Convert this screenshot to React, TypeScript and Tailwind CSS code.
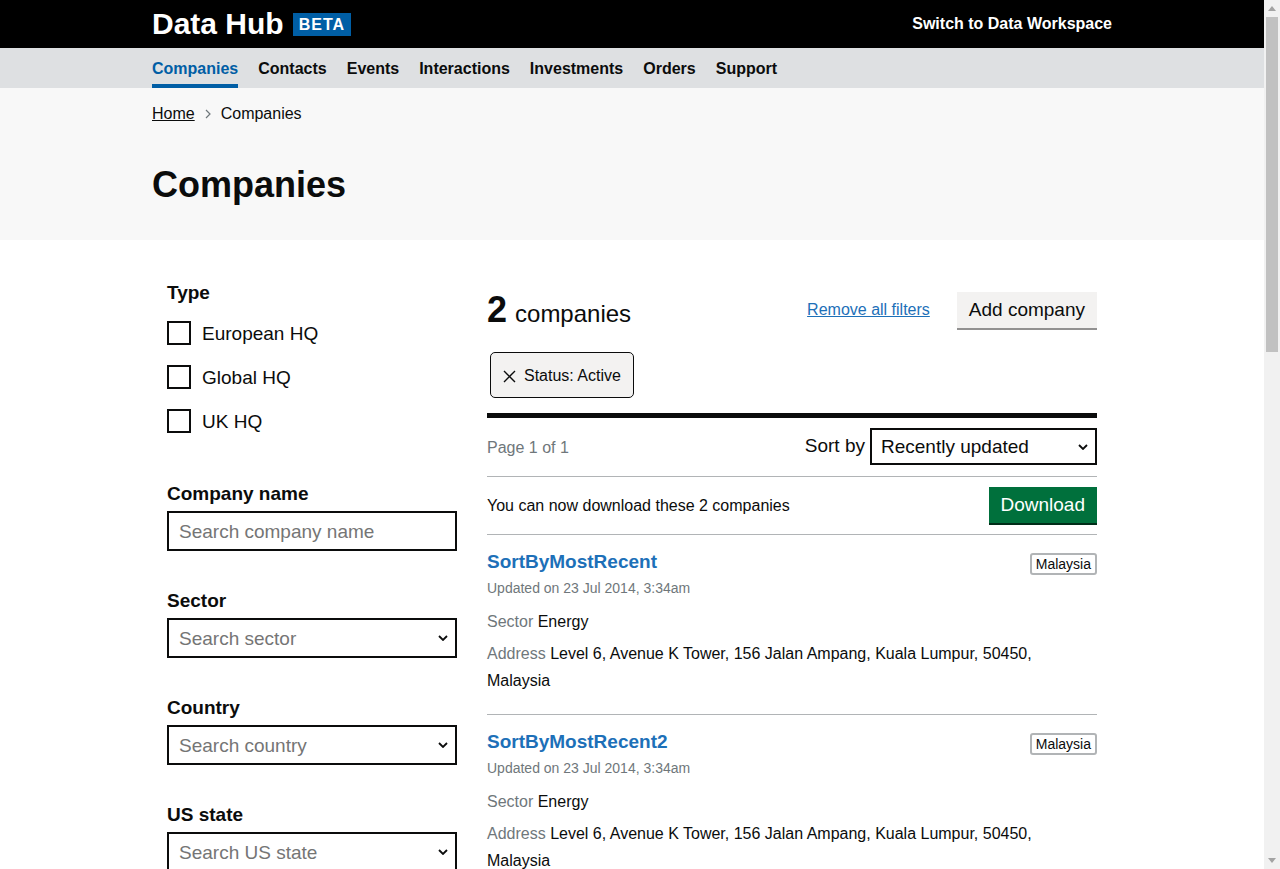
const font = "font-['Liberation_Sans',Arial,sans-serif]"

const navItems = ['Companies', 'Contacts', 'Events', 'Interactions', 'Investments', 'Orders', 'Support']

const companies = [
  { name: 'SortByMostRecent', country: 'Malaysia' },
  { name: 'SortByMostRecent2', country: 'Malaysia' },
]

function Chevron() {
  return (
    <svg width="10" height="6" viewBox="0 0 10 6" className="pointer-events-none absolute right-[7px] top-1/2 -translate-y-1/2">
      <polyline points="1,1 5,5 9,1" fill="none" stroke="#0b0c0c" strokeWidth="1.8" />
    </svg>
  )
}

function FakeSelect({ placeholder }: { placeholder: string }) {
  return (
    <div className="relative mt-[5px] h-[40px] border-2 border-[#0b0c0c] bg-white">
      <div className="flex h-full items-center pl-[10px] pt-[3px] text-[19px] text-[#757575]">{placeholder}</div>
      <Chevron />
    </div>
  )
}

function Field({ label, children }: { label: string; children: React.ReactNode }) {
  return (
    <div className="mb-[37px]">
      <div className="text-[19px] font-bold leading-[25px]">{label}</div>
      {children}
    </div>
  )
}

// browser scrollbar as seen in the screenshot
function Scrollbar() {
  return (
    <div className="fixed right-0 top-0 flex h-screen w-[16px] flex-col items-center bg-[#f1f1f1]">
      <svg width="8" height="5" viewBox="0 0 8 5" className="mt-[6px]">
        <polygon points="0,5 4,0 8,5" fill="#a3a3a3" />
      </svg>
      <div className="mt-[6px] h-[335px] w-[12px] bg-[#c1c1c1]" />
      <div className="flex-1" />
      <svg width="8" height="5" viewBox="0 0 8 5" className="mb-[6px]">
        <polygon points="0,0 8,0 4,5" fill="#a3a3a3" />
      </svg>
    </div>
  )
}

export default function App() {
  return (
    <div className={`${font} min-h-[1400px] w-[1264px] bg-white text-[#0b0c0c]`}>
      {/* Header */}
      <header className="h-[48px] bg-black text-white">
        <div className="mx-auto flex h-full max-w-[960px] items-center justify-between">
          <div className="flex items-center">
            <span className="text-[30px] font-bold leading-none">Data Hub</span>
            <span className="ml-[9px] bg-[#005ea5] px-[6px] text-[16px] font-bold leading-[23px] tracking-[1px]">BETA</span>
          </div>
          <a className="text-[16px] font-bold">Switch to Data Workspace</a>
        </div>
      </header>

      {/* Nav */}
      <nav className="h-[40px] bg-[#dee0e2]">
        <div className="mx-auto flex h-full max-w-[960px] gap-[20px]">
          {navItems.map((item, i) => (
            <a
              key={item}
              className={`flex h-full items-center border-b-4 pt-[6px] text-[16px] font-bold ${
                i === 0 ? 'border-[#005ea5] text-[#005ea5]' : 'border-transparent'
              }`}
            >
              {item}
            </a>
          ))}
        </div>
      </nav>

      {/* Page heading */}
      <div className="h-[152px] bg-[#f8f8f8]">
        <div className="mx-auto max-w-[960px] pt-[16px]">
          <div className="flex items-center text-[16px] leading-[20px]">
            <a className="underline">Home</a>
            <svg width="6" height="10" viewBox="0 0 6 10" className="mx-[10px]">
              <polyline points="1,1 5,5 1,9" fill="none" stroke="#6f777b" strokeWidth="1.2" />
            </svg>
            <span>Companies</span>
          </div>
          <h1 className="mt-[41px] text-[36px] font-bold leading-[40px]">Companies</h1>
        </div>
      </div>

      {/* Main */}
      <main className="mx-auto flex max-w-[960px] pt-[40px]">
        {/* Filters */}
        <aside className="w-[320px] px-[15px]">
          <div className="text-[19px] font-bold leading-[25px]">Type</div>
          <div className="mt-[16px] flex flex-col gap-[20px]">
            {['European HQ', 'Global HQ', 'UK HQ'].map((t) => (
              <label key={t} className="flex h-[24px] items-center">
                <span className="h-[24px] w-[24px] border-2 border-[#0b0c0c] bg-white" />
                <span className="ml-[11px] pt-[2px] text-[19px] leading-[24px]">{t}</span>
              </label>
            ))}
          </div>

          <div className="mt-[48px]">
            <Field label="Company name">
              <div className="mt-[5px] flex h-[40px] items-center border-2 border-[#0b0c0c] pl-[10px] pt-[2px] text-[19px] text-[#757575]">
                Search company name
              </div>
            </Field>
            <Field label="Sector">
              <FakeSelect placeholder="Search sector" />
            </Field>
            <Field label="Country">
              <FakeSelect placeholder="Search country" />
            </Field>
            <Field label="US state">
              <FakeSelect placeholder="Search US state" />
            </Field>
          </div>
        </aside>

        {/* Results */}
        <section className="w-[640px] px-[15px] pt-[11px]">
          <div className="flex h-[38px] items-center justify-between">
            <h2 className="leading-none">
              <span className="text-[36px] font-bold">2</span>
              <span className="ml-[8px] text-[24px]">companies</span>
            </h2>
            <div className="flex items-center">
              <a className="text-[16px] text-[#1d70b8] underline">Remove all filters</a>
              <button className="ml-[27px] h-[36px] bg-[#f3f2f1] px-[12px] text-[19px] shadow-[0_2px_0_#929191]">
                Add company
              </button>
            </div>
          </div>

          <div className="mt-[23px] pl-[3px]">
            <button className="flex h-[46px] items-center rounded-[5px] border border-[#0b0c0c] bg-[#f3f2f1] px-[12px] pt-[2px] text-[16px]">
              <svg width="13" height="13" viewBox="0 0 13 13" className="mr-[8px]">
                <path d="M1 1 L12 12 M12 1 L1 12" stroke="#0b0c0c" strokeWidth="1.4" />
              </svg>
              Status: Active
            </button>
          </div>

          <div className="mt-[15px] h-[5px] bg-[#0b0c0c]" />

          <div className="flex items-center justify-between border-b border-[#b1b4b6] pb-[11px] pt-[10px]">
            <span className="pt-[2px] text-[16px] text-[#6f777b]">Page 1 of 1</span>
            <div className="flex items-center">
              <span className="mr-[5px] text-[19px]">Sort by</span>
              <div className="relative h-[37px] w-[227px] border-2 border-[#0b0c0c]">
                <div className="flex h-full items-center pl-[9px] pt-[2px] text-[19px]">Recently updated</div>
                <Chevron />
              </div>
            </div>
          </div>

          <div className="flex items-center justify-between border-b border-[#b1b4b6] pb-[11px] pt-[10px]">
            <span className="pt-[2px] text-[16px]">You can now download these 2 companies</span>
            <button className="h-[36px] bg-[#00703c] px-[12px] text-[19px] text-white shadow-[0_2px_0_#002d18]">
              Download
            </button>
          </div>

          {companies.map((c) => (
            <article key={c.name} className="border-b border-[#b1b4b6] pb-[20px] pt-[14px]">
              <div className="flex items-start justify-between">
                <div>
                  <h3 className="text-[19px] font-bold leading-[25px] text-[#1d70b8]">{c.name}</h3>
                  <div className="mt-[4px] text-[14px] leading-[20px] text-[#6f777b]">Updated on 23 Jul 2014, 3:34am</div>
                </div>
                <span className="mt-[4px] rounded-[3px] border-2 border-[#b1b4b6] px-[4px] text-[14px] leading-[18px]">
                  {c.country}
                </span>
              </div>
              <dl className="mt-[10px] flex flex-col gap-[5px] text-[16px] leading-[27px]">
                <p>
                  <span className="text-[#6f777b]">Sector</span> Energy
                </p>
                <p className="max-w-[590px]">
                  <span className="text-[#6f777b]">Address</span> Level 6, Avenue K Tower, 156 Jalan Ampang, Kuala Lumpur,
                  50450, Malaysia
                </p>
              </dl>
            </article>
          ))}
        </section>
      </main>

      <Scrollbar />
    </div>
  )
}
